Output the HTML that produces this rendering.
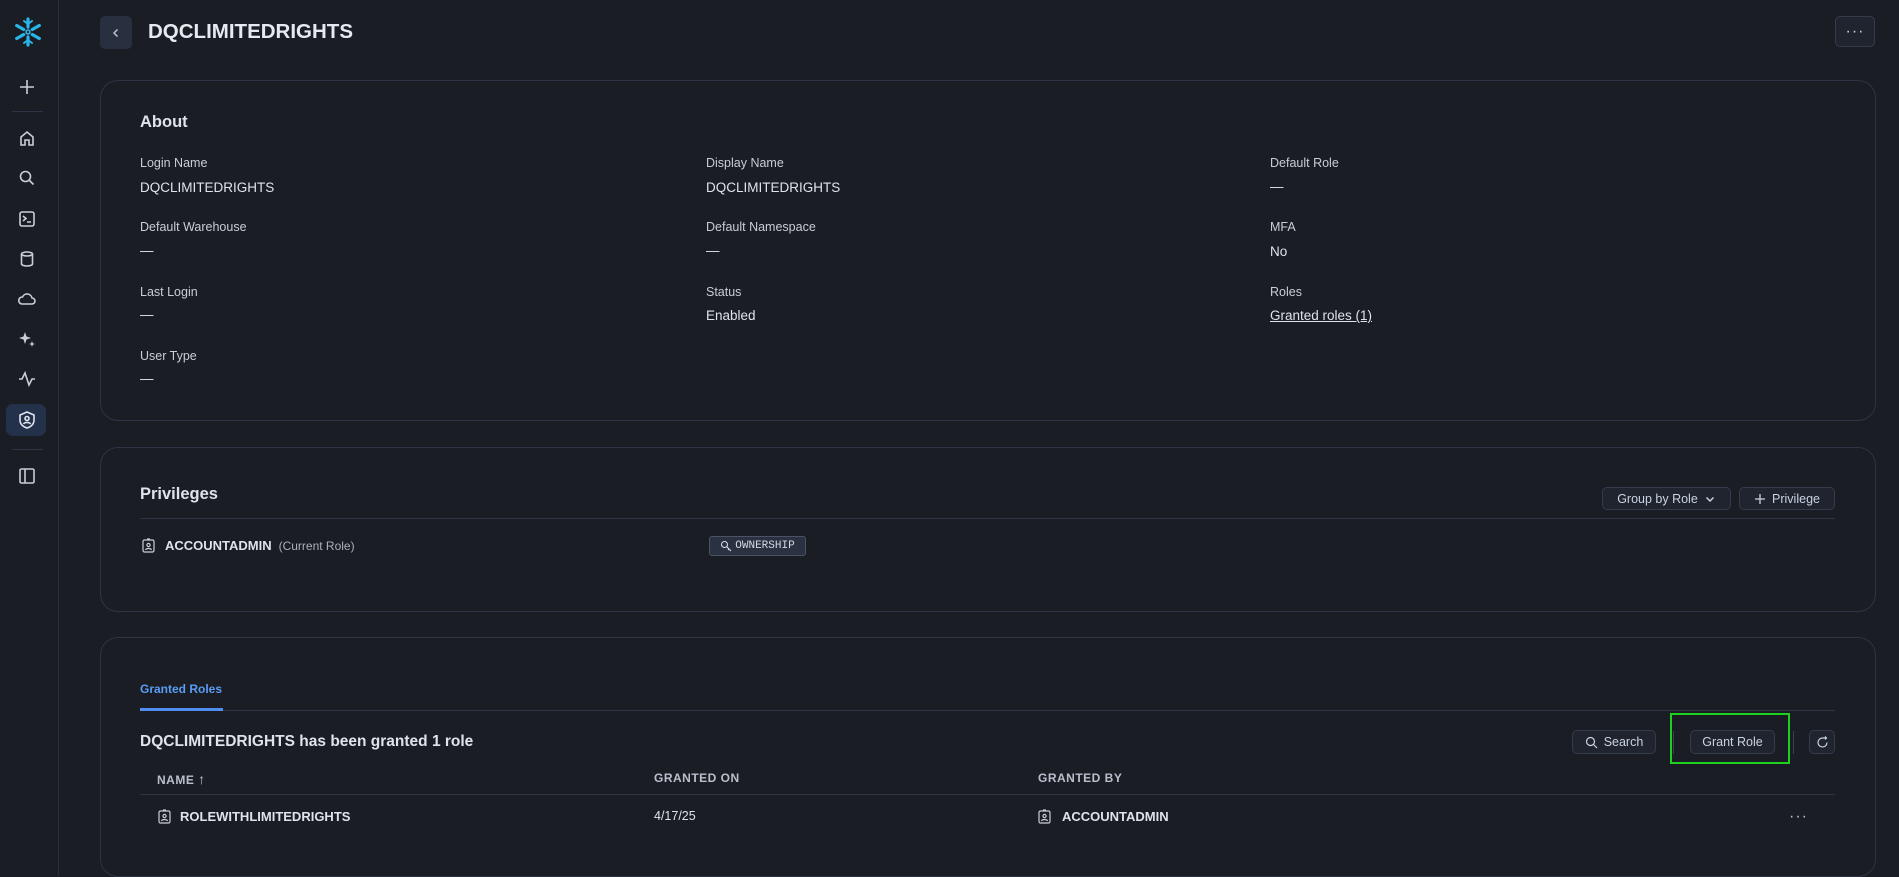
<!DOCTYPE html><html><head><style>
*{box-sizing:border-box;margin:0;padding:0}
body{width:1899px;height:876px;background:#1a1d24;font-family:"Liberation Sans",sans-serif;color:#d9dee7;position:relative;overflow:hidden}
.a{position:absolute}
.side{left:0;top:0;width:59px;height:876px;border-right:1px solid #2a2f3a}
.ic{position:absolute;left:17px;width:20px;height:20px}
.card{position:absolute;left:100px;width:1776px;border:1px solid #2e3443;border-radius:18px}
.lbl{font-size:12.5px;color:#c8cdd6}
.val{font-size:13.5px;color:#dfe3ea}
.btn{position:absolute;border:1px solid #343b4b;background:#1f242e;border-radius:5px;font-size:12.5px;color:#c9d3e3;display:flex;align-items:center;justify-content:center;gap:6px}
.th{font-size:12px;font-weight:bold;letter-spacing:.5px;color:#b9c0cc}
</style></head><body>
<div class="a side">
<svg class="a" style="left:12px;top:16px" width="32" height="32" viewBox="0 0 32 32" fill="none" stroke="#29b5e8" stroke-width="3.2" stroke-linecap="round"><path d="M16 3v8M16 21v8M4.7 9.5l7 4M20.3 18.5l7 4M4.7 22.5l7-4M20.3 13.5l7-4"/><path d="M12 5l4 3 4-3M12 27l4-3 4 3" stroke-width="2"/><circle cx="16" cy="16" r="2" stroke-width="1.6"/></svg>
<svg class="ic" style="top:77px" viewBox="0 0 20 20" stroke="#c9ced8" stroke-width="1.6" fill="none"><path d="M10 3v14M3 10h14"/></svg>
<div class="a" style="left:12px;top:111px;width:31px;height:1px;background:#2e3443"></div>
<svg class="ic" style="top:129px" viewBox="0 0 20 20" stroke="#c9ced8" stroke-width="1.6" fill="none"><path d="M4 16V8l6-5 6 5v8h-4v-5H8v5z"/></svg>
<svg class="ic" style="top:168px" viewBox="0 0 20 20" stroke="#c9ced8" stroke-width="1.6" fill="none"><circle cx="8.5" cy="8.5" r="5"/><path d="M12.5 12.5l4 4"/></svg>
<svg class="ic" style="top:209px" viewBox="0 0 20 20" stroke="#c9ced8" stroke-width="1.6" fill="none"><rect x="3" y="3" width="14" height="14" rx="2"/><path d="M6 7l3 2.5L6 12M10 13h4"/></svg>
<svg class="ic" style="top:249px" viewBox="0 0 20 20" stroke="#c9ced8" stroke-width="1.6" fill="none"><ellipse cx="10" cy="5" rx="5.5" ry="2"/><path d="M4.5 5v10c0 1.1 2.5 2 5.5 2s5.5-.9 5.5-2V5"/></svg>
<svg class="ic" style="top:289px" viewBox="0 0 20 20" stroke="#c9ced8" stroke-width="1.6" fill="none"><path d="M5 15h10a3 3 0 000-6 5 5 0 00-9.5-1A3.5 3.5 0 005 15z"/></svg>
<svg class="ic" style="top:329px" viewBox="0 0 20 20" fill="#c9ced8"><path d="M8 3l1.5 4.5L14 9l-4.5 1.5L8 15l-1.5-4.5L2 9l4.5-1.5z"/><path d="M15 12l.8 2.2 2.2.8-2.2.8L15 18l-.8-2.2-2.2-.8 2.2-.8z"/></svg>
<svg class="ic" style="top:369px" viewBox="0 0 20 20" stroke="#c9ced8" stroke-width="1.6" fill="none"><path d="M2 10h3l3-6 4 12 3-6h3"/></svg>
<div class="a" style="left:6px;top:404px;width:40px;height:32px;background:#24314a;border-radius:7px"></div>
<svg class="ic" style="top:410px" viewBox="0 0 20 20" stroke="#dfe4ee" stroke-width="1.6" fill="none"><path d="M10 2l7 3v5c0 4-3 7-7 8-4-1-7-4-7-8V5z"/><circle cx="10" cy="8.5" r="2"/><path d="M6.5 14c1-2 6-2 7 0"/></svg>
<div class="a" style="left:12px;top:449px;width:31px;height:1px;background:#2e3443"></div>
<svg class="ic" style="top:466px" viewBox="0 0 20 20" stroke="#c9ced8" stroke-width="1.6" fill="none"><rect x="3" y="3" width="14" height="14" rx="1.5"/><path d="M8 3v14"/></svg>
</div>

<div class="a" style="left:100px;top:16px;width:32px;height:33px;background:#28303f;border-radius:5px;display:flex;align-items:center;justify-content:center"><svg width="12" height="12" viewBox="0 0 12 12" stroke="#b8c0ce" stroke-width="1.5" fill="none"><path d="M7.5 2.5L4 6l3.5 3.5"/></svg></div>
<div class="a" style="left:148px;top:20px;font-size:20.5px;font-weight:bold;color:#e6e9ef">DQCLIMITEDRIGHTS</div>
<div class="btn" style="left:1835px;top:16px;width:40px;height:31px;font-size:16px;letter-spacing:1px">···</div>

<div class="card" style="top:80px;height:341px"></div>
<div class="a" style="left:140px;top:113px;font-size:16.5px;font-weight:bold;color:#dfe3ea">About</div>
<div class="a lbl" style="left:140px;top:156px">Login Name</div><div class="a val" style="left:140px;top:180px">DQCLIMITEDRIGHTS</div>
<div class="a lbl" style="left:140px;top:220px">Default Warehouse</div><div class="a val" style="left:140px;top:243px">—</div>
<div class="a lbl" style="left:140px;top:285px">Last Login</div><div class="a val" style="left:140px;top:307px">—</div>
<div class="a lbl" style="left:140px;top:349px">User Type</div><div class="a val" style="left:140px;top:371px">—</div>
<div class="a lbl" style="left:706px;top:156px">Display Name</div><div class="a val" style="left:706px;top:180px">DQCLIMITEDRIGHTS</div>
<div class="a lbl" style="left:706px;top:220px">Default Namespace</div><div class="a val" style="left:706px;top:243px">—</div>
<div class="a lbl" style="left:706px;top:285px">Status</div><div class="a val" style="left:706px;top:308px">Enabled</div>
<div class="a lbl" style="left:1270px;top:156px">Default Role</div><div class="a val" style="left:1270px;top:179px">—</div>
<div class="a lbl" style="left:1270px;top:220px">MFA</div><div class="a val" style="left:1270px;top:244px">No</div>
<div class="a lbl" style="left:1270px;top:285px">Roles</div><div class="a val" style="left:1270px;top:308px;text-decoration:underline">Granted roles (1)</div>

<div class="card" style="top:447px;height:165px"></div>
<div class="a" style="left:140px;top:485px;font-size:16.5px;font-weight:bold;color:#dfe3ea">Privileges</div>
<div class="btn" style="left:1602px;top:487px;width:129px;height:23px">Group by Role <svg width="12" height="12" viewBox="0 0 12 12" stroke="#c9d3e3" stroke-width="1.5" fill="none"><path d="M2.5 4.5L6 8l3.5-3.5"/></svg></div>
<div class="btn" style="left:1739px;top:487px;width:96px;height:23px"><svg width="12" height="12" viewBox="0 0 12 12" stroke="#c9d3e3" stroke-width="1.3"><path d="M6 1v10M1 6h10"/></svg>Privilege</div>
<div class="a" style="left:140px;top:518px;width:1695px;height:1px;background:#2e3443"></div>
<svg class="a" style="left:142px;top:538px" width="13" height="15" viewBox="0 0 13 15" stroke="#c9ced8" stroke-width="1.2" fill="none"><rect x="1" y="2" width="11" height="12" rx="1.5"/><path d="M5 1h3"/><circle cx="6.5" cy="7" r="1.6"/><path d="M3.5 12c.5-2 5.5-2 6 0"/></svg>
<div class="a" style="left:165px;top:538px;font-size:13px;font-weight:bold;color:#dfe3ea">ACCOUNTADMIN <span style="font-weight:normal;font-size:12px;color:#aab1bd">&nbsp;(Current Role)</span></div>
<div class="a" style="left:709px;top:536px;width:97px;height:20px;border:1px solid #4a5366;background:#2a3140;border-radius:3px;font-family:'Liberation Mono',monospace;font-size:11px;color:#d4dae4;display:flex;align-items:center;justify-content:center;gap:3px"><svg width="12" height="12" viewBox="0 0 12 12" stroke="#d4dae4" stroke-width="1.1" fill="none"><circle cx="4.5" cy="4.5" r="3"/><path d="M6.7 6.7L11 11M9 9l-1 1"/></svg>OWNERSHIP</div>

<div class="card" style="top:637px;height:240px"></div>
<div class="a" style="left:140px;top:682px;font-size:12px;font-weight:bold;color:#5b9cf4">Granted Roles</div>
<div class="a" style="left:140px;top:710px;width:1695px;height:1px;background:#2e3443"></div>
<div class="a" style="left:140px;top:708px;width:83px;height:3px;background:#4f8ef0"></div>
<div class="a" style="left:140px;top:733px;font-size:15.5px;font-weight:bold;color:#dfe3ea">DQCLIMITEDRIGHTS has been granted 1 role</div>
<div class="btn" style="left:1572px;top:730px;width:84px;height:24px"><svg width="13" height="13" viewBox="0 0 13 13" stroke="#c9d3e3" stroke-width="1.2" fill="none"><circle cx="5.5" cy="5.5" r="4"/><path d="M8.5 8.5l3.5 3.5"/></svg>Search</div>
<div class="a" style="left:1673px;top:731px;width:1px;height:23px;background:#3a4150"></div>
<div class="a" style="left:1670px;top:713px;width:120px;height:51px;border:2px solid #1fd11f"></div>
<div class="btn" style="left:1690px;top:730px;width:85px;height:24px">Grant Role</div>
<div class="a" style="left:1793px;top:731px;width:1px;height:23px;background:#3a4150"></div>
<div class="btn" style="left:1809px;top:730px;width:26px;height:24px"><svg width="13" height="13" viewBox="0 0 13 13" stroke="#c9d3e3" stroke-width="1.2" fill="none"><path d="M11 6.5A4.5 4.5 0 116.5 2h3M9 .5l1.5 1.5L9 3.5"/></svg></div>
<div class="a th" style="left:157px;top:771px">NAME <span style="font-size:14px">↑</span></div>
<div class="a th" style="left:654px;top:771px">GRANTED ON</div>
<div class="a th" style="left:1038px;top:771px">GRANTED BY</div>
<div class="a" style="left:140px;top:794px;width:1695px;height:1px;background:#2e3443"></div>
<svg class="a" style="left:158px;top:809px" width="13" height="15" viewBox="0 0 13 15" stroke="#c9ced8" stroke-width="1.2" fill="none"><rect x="1" y="2" width="11" height="12" rx="1.5"/><path d="M5 1h3"/><circle cx="6.5" cy="7" r="1.6"/><path d="M3.5 12c.5-2 5.5-2 6 0"/></svg>
<div class="a" style="left:180px;top:809px;font-size:13px;font-weight:bold;color:#dfe3ea">ROLEWITHLIMITEDRIGHTS</div>
<div class="a" style="left:654px;top:809px;font-size:12.5px;color:#dfe3ea">4/17/25</div>
<svg class="a" style="left:1038px;top:809px" width="13" height="15" viewBox="0 0 13 15" stroke="#c9ced8" stroke-width="1.2" fill="none"><rect x="1" y="2" width="11" height="12" rx="1.5"/><path d="M5 1h3"/><circle cx="6.5" cy="7" r="1.6"/><path d="M3.5 12c.5-2 5.5-2 6 0"/></svg>
<div class="a" style="left:1062px;top:809px;font-size:13px;font-weight:bold;color:#dfe3ea">ACCOUNTADMIN</div>
<div class="a" style="left:1789px;top:808px;font-size:16px;color:#b9c0cc;letter-spacing:1px">···</div>
</body></html>
